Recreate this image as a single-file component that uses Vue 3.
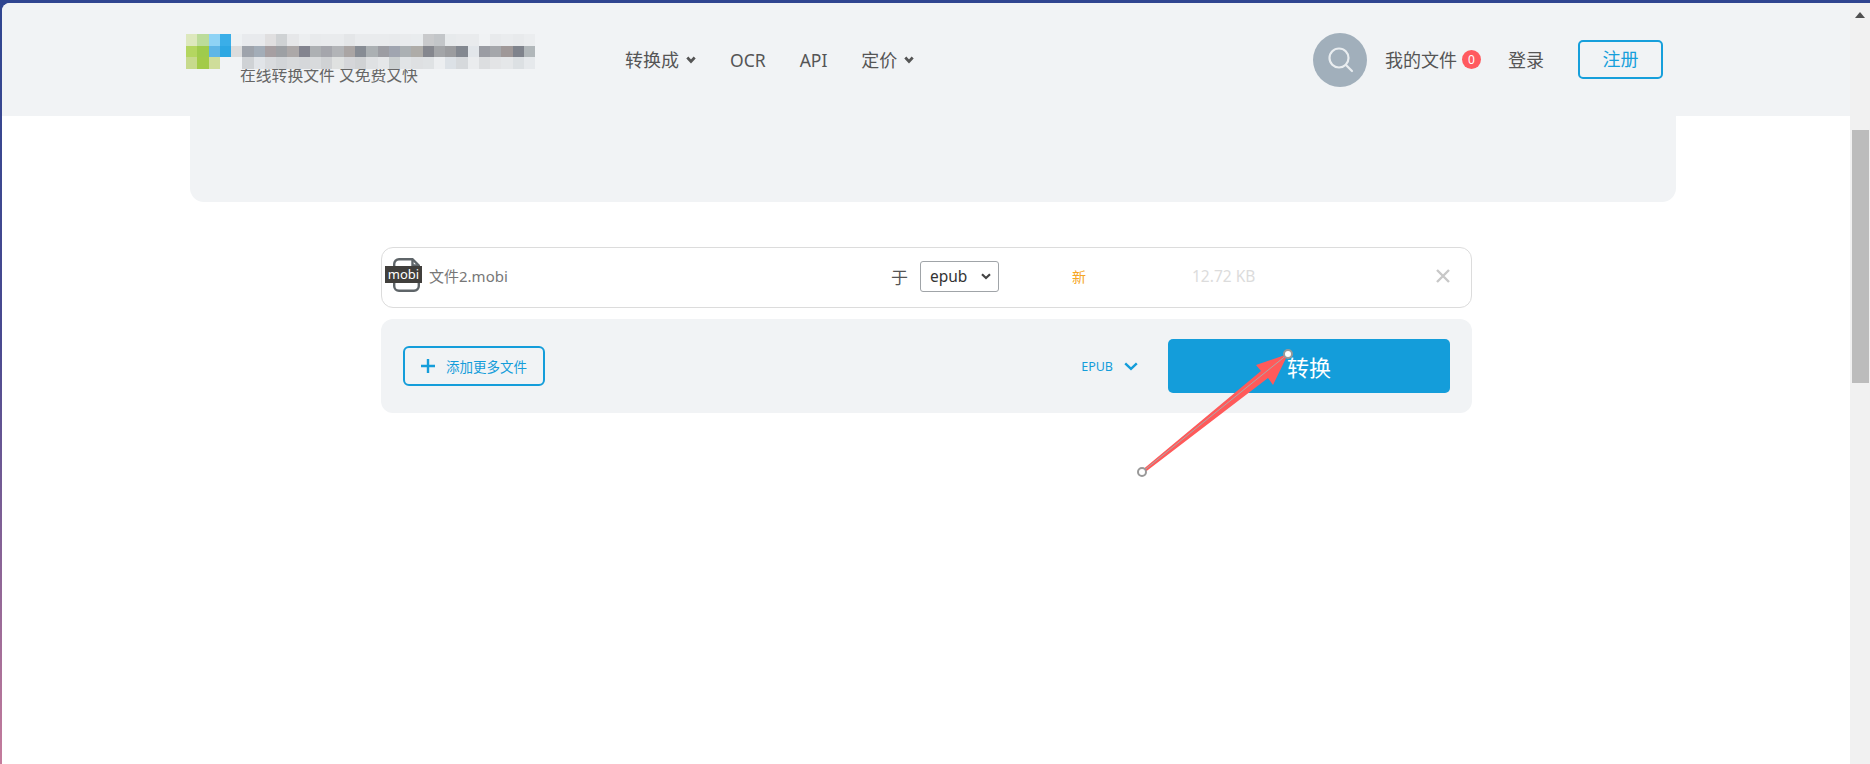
<script setup>
const top = ['#dde8bd','#bcdc9a','#8fd3f5','#3aaee8','#eef1f3','#e8eaed','#e8eaed','#e0dfe0','#cfd2d4','#e6e7e9','#eceef0','#e8eaec','#e9ebed','#e9ebed','#e4e6e8','#e9ebed','#e9ebed','#e9ebed','#e8eaec','#e9ebed','#e9ecee','#c9cacc','#c3c6c9','#e7eaec','#e9ebed','#e9ebed','#f0f2f4','#e8eaec','#eaecee','#e8eaec','#ebedef']
const mid = ['#b4d660','#9fcb4c','#5fb6e6','#2da7e3','#dcdcdc','#9ea3ab','#a3adb8','#a69fa2','#9da0a4','#aca8a8','#83848f','#adb0b3','#a5a6ac','#b2b4b7','#aaa5a4','#878c94','#abb0b3','#9c9da3','#a0a5b0','#abb0b3','#aeaca8','#85878e','#a3a5a8','#9b9c9f','#838890','#e2e6ea','#9a9ca3','#a5a7ab','#9f9898','#7f838c','#b1b7ba']
const bottom = ['#c7da8c','#a3cb48','#cfdd9a','#f1f3f5','#f1f3f5','#cfd2d5','#e1e4e8','#d9dbde','#d2d5d8','#d7d9db','#d5d7da','#d8dadc','#d0d2d4','#dfe1e0','#d5d6d9','#d0d2d4','#dfe1e3','#e5e7e9','#cbd0d1','#e1e4e6','#dee0e2','#dfe2e4','#eceef0','#dce1e6','#d6d9dc','#eaecee','#dcdee0','#e3e4e6','#e5e7e9','#dce0e3','#e6e9ec']
const cells = [...top, ...mid, ...bottom]
</script>

<template>
  <div class="desktop">
    <div class="window">
      <div class="page">
        <header class="header">
          <div class="brand">
            <div class="mosaic">
              <i v-for="(c, n) in cells" :key="n" :style="{ background: c }"></i>
            </div>
            <div class="tagline">在线转换文件 又免费又快</div>
          </div>
          <nav class="nav">
            <a class="nav-item">转换成<svg class="caret" viewBox="0 0 10 8"><path d="M1.3 1.6 5 5.4l3.7-3.8" /></svg></a>
            <a class="nav-item latin">OCR</a>
            <a class="nav-item latin">API</a>
            <a class="nav-item">定价<svg class="caret" viewBox="0 0 10 8"><path d="M1.3 1.6 5 5.4l3.7-3.8" /></svg></a>
          </nav>
          <div class="account">
            <div class="search">
              <svg viewBox="0 0 54 54" width="54" height="54"><circle cx="26" cy="25" r="9.5" /><path d="m33 32 6 6" /></svg>
            </div>
            <a class="files">我的文件<span class="badge">0</span></a>
            <a class="login">登录</a>
            <a class="signup">注册</a>
          </div>
        </header>

        <div class="hero"></div>

        <section class="converter">
          <div class="file-row">
            <div class="file-icon">
              <svg viewBox="0 0 27 34" width="27" height="34"><path d="M6 1.2h13.5l6.3 6.3V28a4.8 4.8 0 0 1-4.8 4.8H6A4.8 4.8 0 0 1 1.2 28V6A4.8 4.8 0 0 1 6 1.2Z" /><path d="M19.5 1.2v6.3h6.3" /></svg>
              <span class="file-ext">mobi</span>
            </div>
            <div class="file-name">文件2.mobi</div>
            <div class="file-to">于</div>
            <select class="format"><option>epub</option></select>
            <div class="file-new">新</div>
            <div class="file-size">12.72 KB</div>
            <svg class="file-close" viewBox="0 0 14 14" width="14" height="14"><path d="m1 1 12 12M13 1 1 13" /></svg>
          </div>

          <div class="actions">
            <button class="add"><svg viewBox="0 0 16 16" width="16" height="16"><path d="M8 1v14M1 8h14" /></svg><span>添加更多文件</span></button>
            <div class="target">EPUB<svg viewBox="0 0 14 9" width="14" height="9"><path d="m1.2 1.3 5.8 5.6 5.8-5.6" /></svg></div>
            <button class="convert">转换</button>
          </div>
        </section>
      </div>

      <div class="scrollbar">
        <svg class="scroll-up" viewBox="0 0 10 6" width="10" height="6"><path d="M5 0 10 6H0Z" /></svg>
        <div class="thumb"></div>
      </div>

      <svg class="annotation" viewBox="0 0 1870 764" width="1870" height="764">
        <path class="arrow" d="M1288 354 1273 385 1268 378 1144 473 1141 471 1261 371 1256 365Z" />
        <path class="arrow-line" d="M1142 472 1288 354" />
        <circle class="dot" cx="1142" cy="472" r="4" />
        <circle class="dot" cx="1288" cy="354" r="4" />
      </svg>
    </div>
  </div>
</template>

<style>
html, body { margin: 0; height: 100%; overflow: hidden; }
</style>

<style scoped>
.desktop {
  width: 1870px;
  height: 764px;
  overflow: hidden;
  background: linear-gradient(180deg, #2f4590 0%, #4a4a90 45%, #c57c9c 100%);
  font-family: "Noto Sans", "Noto Sans CJK SC", sans-serif;
  color: #555;
}
.window {
  position: relative;
  display: flex;
  height: 761px;
  margin: 3px 0 0 2px;
  border-top-left-radius: 8px;
  overflow: hidden;
  background: #fff;
}
.page { width: 1848px; flex: none; }
.header {
  display: flex;
  align-items: center;
  box-sizing: border-box;
  height: 113px;
  padding: 0 187px 0 184px;
  background: #f1f3f5;
}
.brand { width: 349px; margin-top: -2px; }
.mosaic {
  position: relative;
  display: grid;
  grid-template-columns: repeat(31, 11.27px);
  grid-auto-rows: 11.7px;
}
.tagline {
  margin: -2px 0 0 54px;
  font-size: 15.8px;
  line-height: 16px;
  color: #666;
  white-space: nowrap;
}
.nav {
  display: flex;
  align-items: center;
  gap: 34px;
  margin-left: 90px;
}
.nav-item {
  display: flex;
  align-items: center;
  font-size: 18px;
  line-height: 24px;
  color: #555;
}
.latin { font-size: 17.5px; }
.caret { width: 10px; height: 8px; margin-left: 7px; }
.caret path { fill: none; stroke: #555; stroke-width: 2.8; }
.account { display: flex; align-items: center; margin-left: auto; }
.search {
  width: 54px;
  height: 54px;
  border-radius: 50%;
  background: #a1afbb;
}
.search svg { display: block; fill: none; stroke: #e9edf0; stroke-width: 2.2; stroke-linecap: round; }
.files {
  display: flex;
  align-items: center;
  margin-left: 18px;
  font-size: 18px;
  line-height: 24px;
}
.badge {
  width: 19px;
  height: 19px;
  margin-left: 5px;
  border-radius: 50%;
  background: #ff5a5f;
  color: #fff;
  font-size: 12px;
  line-height: 19px;
  text-align: center;
}
.login { margin-left: 27px; font-size: 18px; line-height: 24px; }
.signup {
  box-sizing: border-box;
  width: 85px;
  height: 39px;
  margin-left: 34px;
  border: 2px solid #169fdb;
  border-radius: 5px;
  color: #169fdb;
  font-size: 18px;
  line-height: 35px;
  text-align: center;
}
.hero {
  width: 1486px;
  height: 86px;
  margin-left: 188px;
  border-radius: 0 0 14px 14px;
  background: #f1f3f5;
}
.converter { width: 1091px; margin: 45px 0 0 379px; }
.file-row {
  display: flex;
  align-items: center;
  box-sizing: border-box;
  height: 61px;
  padding: 0 0 3px 3px;
  border: 1px solid #dcdcdc;
  border-radius: 12px;
  background: #fff;
}
.file-icon {
  position: relative;
  flex: none;
  box-sizing: border-box;
  width: 37px;
  height: 34px;
  margin-bottom: 2px;
  padding-left: 8px;
}
.file-icon svg { display: block; fill: none; stroke: #5f6569; stroke-width: 2.4; }
.file-ext {
  position: absolute;
  left: 0;
  top: 8px;
  width: 37px;
  height: 17px;
  background: #413f3c;
  color: #fff;
  font-size: 13px;
  line-height: 16px;
  text-align: center;
}
.file-name { width: 462px; flex: none; margin-left: 7px; font-size: 15px; line-height: 24px; color: #777; }
.file-to { width: 29px; flex: none; font-size: 17px; color: #555; }
.format {
  box-sizing: border-box;
  flex: none;
  width: 79px;
  height: 31px;
  padding: 0 0 0 9px;
  border: 1px solid #a0a4a8;
  border-radius: 3px;
  appearance: none;
  background: #fff url("data:image/svg+xml,%3Csvg xmlns='http://www.w3.org/2000/svg' width='10' height='7'%3E%3Cpath d='M1 1.2 5 5l4-3.8' fill='none' stroke='%23444' stroke-width='2.2'/%3E%3C/svg%3E") no-repeat right 7px center;
  color: #333;
  font: 15.5px "Noto Sans", sans-serif;
}
.file-new { flex: none; margin-left: 73px; font-size: 14px; color: #f5a623; }
.file-size { flex: none; margin-left: 106px; font-size: 15.5px; color: #dcdcdc; }
.file-close { margin-left: 181px; fill: none; stroke: #c8c8c8; stroke-width: 2.4; }
.actions {
  display: flex;
  align-items: center;
  box-sizing: border-box;
  height: 94px;
  margin-top: 11px;
  padding: 0 22px;
  border-radius: 12px;
  background: #f1f3f5;
}
.add {
  display: flex;
  align-items: center;
  box-sizing: border-box;
  width: 142px;
  height: 40px;
  padding: 0 0 0 15px;
  border: 2px solid #149dda;
  border-radius: 6px;
  background: transparent;
  color: #149dda;
  font: 13.5px "Noto Sans", "Noto Sans CJK SC", sans-serif;
}
.add svg { margin-right: 10px; fill: none; stroke: #149dda; stroke-width: 2.4; }
.target {
  display: flex;
  align-items: center;
  margin-left: auto;
  color: #149dda;
  font-size: 12.5px;
}
.target svg { margin: 0 30px 0 11px; fill: none; stroke: #149dda; stroke-width: 2.4; }
.convert {
  width: 282px;
  height: 54px;
  border: none;
  border-radius: 5px;
  background: #149dda;
  color: #fff;
  font: 22px "Noto Sans", "Noto Sans CJK SC", sans-serif;
}
.scrollbar {
  flex: 1;
  position: relative;
  background: #f1f1f1;
}
.scroll-up { display: block; margin: 9px auto 0; fill: #505050; }
.thumb {
  width: 17px;
  height: 253px;
  margin: 112px 0 0 2px;
  background: #bcbcbc;
}
.annotation { position: absolute; left: -2px; top: -3px; pointer-events: none; }
.arrow { fill: #ff5a5a; }
.arrow-line { fill: none; stroke: #aaa; stroke-width: 1; }
.dot { fill: #fff; stroke: #999; stroke-width: 2; }
</style>
